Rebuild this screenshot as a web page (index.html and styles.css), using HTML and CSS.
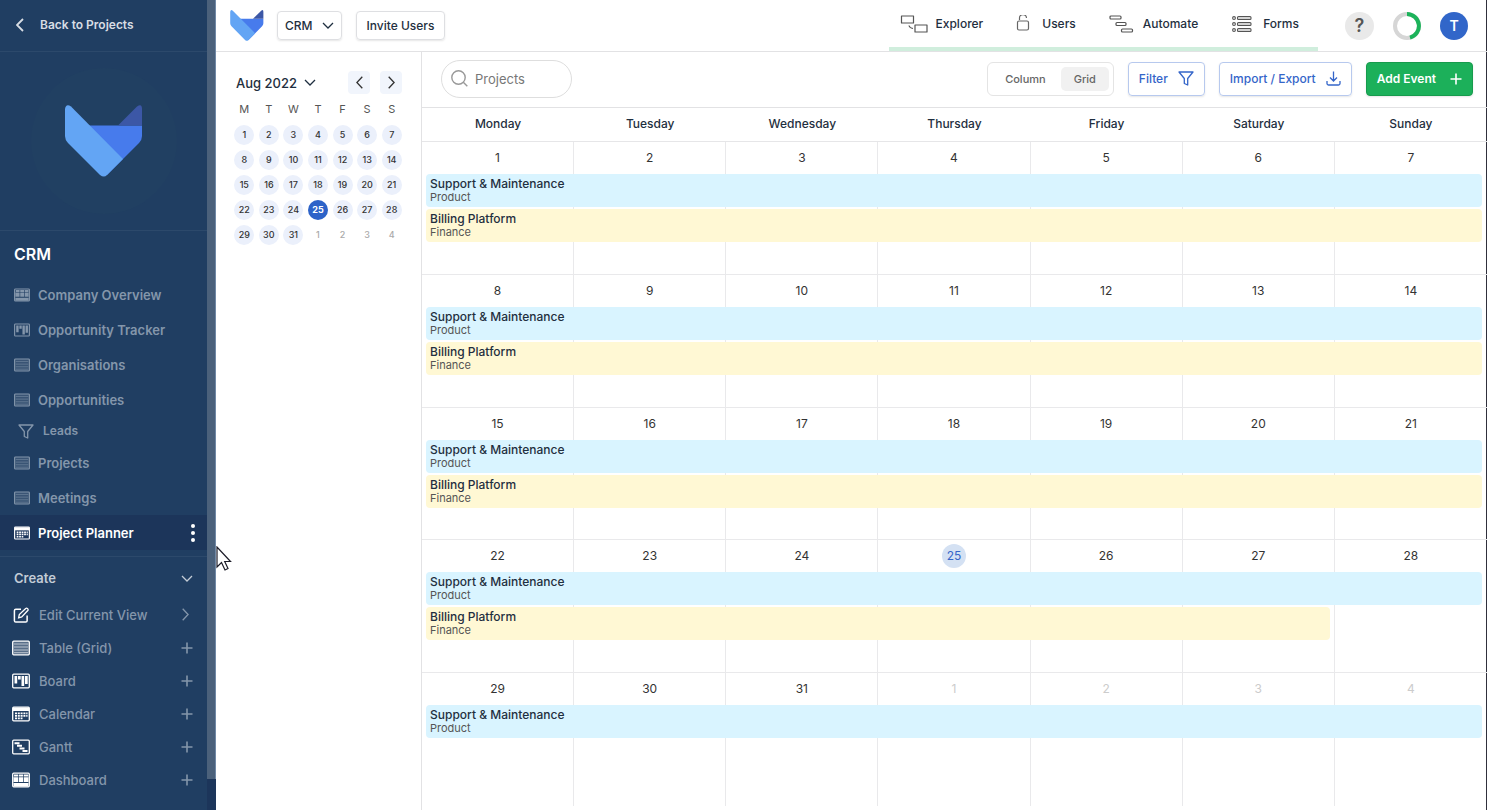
FILE: index.html
```html
<!DOCTYPE html>
<html lang="en">
<head>
<meta charset="utf-8">
<title>Project Planner</title>
<link rel="stylesheet" href="styles.css">
</head>
<body>
<svg class="sprite" aria-hidden="true">
  <symbol id="fox" viewBox="0 0 78 72"><path d="M22 20.500H77V31q0 4-3 7L42 70Z" fill="#477bec"/><path d="M77 20.500H53L72 1.500Q77-2 77 4Z" fill="#3c57a6"/><path d="M0 4Q1-2 6 1.500L58 54 42 70q-3 3-7 0L3 38q-3-3-3-7Z" fill="#63a5f4"/></symbol>
  <symbol id="table" viewBox="0 0 18 15"><rect x=".7" y=".7" width="16.600" height="13.600" rx="1" fill="currentColor" fill-opacity=".25" stroke="currentColor" stroke-width="1.300"/><path d="M2 3.500h14M2 6.500h14M2 9.500h14M2 12.200h14" stroke="currentColor" stroke-opacity=".6"/></symbol>
  <symbol id="board" viewBox="0 0 18 15"><rect x=".7" y=".7" width="16.600" height="13.600" rx="1" fill="none" stroke="currentColor" stroke-width="1.300"/><path d="M2.500 2.500h2.700v7.500H2.500zM6 2.500h2.700v3.500H6zM9.500 2.500h2.700v10H9.500zM13 2.500h2.700v8H13z" fill="currentColor"/></symbol>
  <symbol id="calendar" viewBox="0 0 18 15"><rect x=".7" y=".7" width="16.600" height="13.600" rx="1" fill="none" stroke="currentColor" stroke-width="1.300"/><path d="M1 1h16v3.500H1z" fill="currentColor"/><path d="M3 6.800h12.500M3 9.300h12.500M3 11.800h7.500" stroke="currentColor" stroke-width="1.700" stroke-dasharray="2 .8"/></symbol>
  <symbol id="gantt" viewBox="0 0 18 15"><rect x=".7" y=".7" width="16.600" height="13.600" rx="1" fill="none" stroke="currentColor" stroke-width="1.300"/><path d="M2.500 3.700h5M5 6.200h5M7.500 8.900h5M10.500 11.500h5" stroke="currentColor" stroke-width="2"/></symbol>
  <symbol id="dashboard" viewBox="0 0 18 15"><rect x=".7" y=".7" width="16.600" height="13.600" rx="1" fill="none" stroke="currentColor" stroke-width="1.300"/><path d="M2 2h4.300v2H2zM7 2h4.300v2H7zM12 2h4.300v2H12zM1.500 4.800h4.800v4.800H1.500zM7 4.800h4.300v4.800H7zM12 4.800h4.500v4.800H12zM1.500 10.500h15v3.500h-15z" fill="currentColor"/></symbol>
  <symbol id="filter" viewBox="0 0 16 15"><path d="M1 1h14l-5.300 6.500V14l-3.400-1.500v-5Z" fill="none" stroke="currentColor" stroke-width="1.300" stroke-linejoin="round"/></symbol>
  <symbol id="down" viewBox="0 0 12 7"><path d="m1 1 5 5 5-5" fill="none" stroke="currentColor" stroke-width="1.300"/></symbol>
  <symbol id="left" viewBox="0 0 7 13"><path d="M6.300.7.900 6.500l5.400 5.800" fill="none" stroke="currentColor" stroke-width="1.300"/></symbol>
  <symbol id="right" viewBox="0 0 7 13"><path d="m.7.700 5.400 5.800L.7 12.300" fill="none" stroke="currentColor" stroke-width="1.300"/></symbol>
  <symbol id="plus" viewBox="0 0 12 12"><path d="M6 .5v11M.5 6h11" stroke="currentColor" stroke-width="1.600"/></symbol>
</svg>
<aside class="sidebar">
  <div class="sidebar-content">
    <a class="back" href="#"><svg class="back-icon" viewBox="0 0 8 14"><path d="M7 1 1 7l6 6" fill="none" stroke="currentColor" stroke-width="1.800"/></svg>Back to Projects</a>
    <div class="brand"><div class="brand-disc"><svg class="brand-logo"><use href="#fox"/></svg></div></div>
    <h1 class="project-name">CRM</h1>
    <nav class="views">
      <a class="view" href="#"><svg class="view-icon"><use href="#dashboard"/></svg>Company Overview</a>
      <a class="view" href="#"><svg class="view-icon"><use href="#board"/></svg>Opportunity Tracker</a>
      <a class="view" href="#"><svg class="view-icon"><use href="#table"/></svg>Organisations</a>
      <a class="view" href="#"><svg class="view-icon"><use href="#table"/></svg>Opportunities</a>
      <a class="view view-sub" href="#"><svg class="filter-icon"><use href="#filter"/></svg>Leads</a>
      <a class="view" href="#"><svg class="view-icon"><use href="#table"/></svg>Projects</a>
      <a class="view" href="#"><svg class="view-icon"><use href="#table"/></svg>Meetings</a>
      <a class="view view-active" href="#"><svg class="view-icon"><use href="#calendar"/></svg>Project Planner<svg class="more" viewBox="0 0 4 18"><circle cx="2" cy="2" r="2"/><circle cx="2" cy="9" r="2"/><circle cx="2" cy="16" r="2"/></svg></a>
    </nav>
    <section class="create">
      <button class="create-title">Create<svg class="chevron-down push"><use href="#down"/></svg></button>
      <button class="create-item"><svg class="create-icon" viewBox="0 0 18 17"><path d="M9 2.500H3.500Q2 2.500 2 4v10.500Q2 16 3.500 16H14q1.500 0 1.500-1.500V9" fill="none" stroke="#fff" stroke-width="1.600"/><path d="m6.500 11.500.700-3.500L14 1.500q1-.8 2 .2t.2 2L9.800 10.500Z" fill="none" stroke="#fff" stroke-width="1.400"/></svg>Edit Current View<svg class="chevron-right push"><use href="#right"/></svg></button>
      <button class="create-item"><svg class="create-icon"><use href="#table"/></svg>Table (Grid)<svg class="plus push"><use href="#plus"/></svg></button>
      <button class="create-item"><svg class="create-icon"><use href="#board"/></svg>Board<svg class="plus push"><use href="#plus"/></svg></button>
      <button class="create-item"><svg class="create-icon"><use href="#calendar"/></svg>Calendar<svg class="plus push"><use href="#plus"/></svg></button>
      <button class="create-item"><svg class="create-icon"><use href="#gantt"/></svg>Gantt<svg class="plus push"><use href="#plus"/></svg></button>
      <button class="create-item"><svg class="create-icon"><use href="#dashboard"/></svg>Dashboard<svg class="plus push"><use href="#plus"/></svg></button>
    </section>
  </div>
  <div class="scroll-track"><div class="scroll-thumb"></div></div>
</aside>
<div class="app">
  <header class="topbar">
    <svg class="top-logo"><use href="#fox"/></svg>
    <button class="top-button project-switch">CRM<svg class="chevron-down"><use href="#down"/></svg></button>
    <button class="top-button">Invite Users</button>
    <nav class="tools">
      <a class="tool" href="#"><svg width="28" height="18" viewBox="0 0 28 18"><path d="M1.500 1h12v7h-12zM15 10h12v7H15zM9 10.500q.5 2.500 4 3" fill="none" stroke="#555" stroke-width="1.200" stroke-linejoin="round"/></svg>Explorer</a>
      <a class="tool" href="#"><svg width="18" height="18" viewBox="0 0 18 18"><rect x="1.500" y="6" width="11" height="9" rx="1.500" fill="none" stroke="#666" stroke-width="1.200"/><path d="M3.500 5V3.500a3.500 3.500 0 0 1 7-.5" fill="none" stroke="#666" stroke-width="1.200"/></svg>Users</a>
      <a class="tool" href="#"><svg width="26" height="18" viewBox="0 0 26 18"><g fill="none" stroke="#555" stroke-width="1.200"><rect x="1" y="1" width="11" height="3" rx="1"/><rect x="7" y="7.500" width="10" height="3" rx="1"/><rect x="12.500" y="14" width="11" height="3" rx="1"/></g></svg>Automate</a>
      <a class="tool" href="#"><svg width="24" height="18" viewBox="0 0 24 18"><g fill="none" stroke="#555" stroke-width="1.100"><circle cx="3" cy="3" r="1.400"/><circle cx="3" cy="9" r="1.400"/><circle cx="3" cy="15" r="1.400"/><rect x="6.500" y="1.600" width="13.500" height="2.800" rx="1"/><rect x="6.500" y="7.600" width="13.500" height="2.800" rx="1"/><rect x="6.500" y="13.600" width="13.500" height="2.800" rx="1"/></g></svg>Forms</a>
    </nav>
    <div class="account">
      <button class="help" aria-label="Help">?</button>
      <svg class="ring" viewBox="0 0 28 28"><circle cx="14" cy="14" r="12" fill="none" stroke="#d6d6d6" stroke-width="4"/><path d="M14 2a12 12 0 0 1 3 23.600" fill="none" stroke="#1cb35a" stroke-width="4"/></svg>
      <button class="avatar">T</button>
    </div>
  </header>
  <div class="body">
    <section class="mini">
      <div class="mini-head">
        <button class="month">Aug 2022<svg class="chevron-down"><use href="#down"/></svg></button>
        <button class="step" aria-label="Previous month"><svg><use href="#left"/></svg></button>
        <button class="step" aria-label="Next month"><svg><use href="#right"/></svg></button>
      </div>
      <div class="mini-grid mini-weekdays"><span>M</span><span>T</span><span>W</span><span>T</span><span>F</span><span>S</span><span>S</span></div>
      <div class="mini-grid mini-days">
        <button>1</button><button>2</button><button>3</button><button>4</button><button>5</button><button>6</button><button>7</button>
        <button>8</button><button>9</button><button>10</button><button>11</button><button>12</button><button>13</button><button>14</button>
        <button>15</button><button>16</button><button>17</button><button>18</button><button>19</button><button>20</button><button>21</button>
        <button>22</button><button>23</button><button>24</button><button class="selected">25</button><button>26</button><button>27</button><button>28</button>
        <button>29</button><button>30</button><button>31</button><button class="outside">1</button><button class="outside">2</button><button class="outside">3</button><button class="outside">4</button>
      </div>
    </section>
    <main class="planner">
      <div class="toolbar">
        <label class="search"><svg viewBox="0 0 17 17"><circle cx="7.500" cy="7.500" r="6.700" fill="none" stroke="#999" stroke-width="1.400"/><path d="m12.300 12.300 4 4" stroke="#999" stroke-width="1.400"/></svg><input type="text" placeholder="Projects" aria-label="Search projects"></label>
        <div class="toggle"><button>Column</button><button class="on">Grid</button></div>
        <button class="action">Filter<svg class="filter-icon"><use href="#filter"/></svg></button>
        <button class="action">Import / Export<svg class="download" viewBox="0 0 15 15"><path d="M7.500.500v9M4 6.500l3.500 3.500L11 6.500M1 10v2.500Q1 14 2.500 14h10q1.500 0 1.500-1.500V10" fill="none" stroke="currentColor" stroke-width="1.300"/></svg></button>
        <button class="action add">Add Event<svg class="plus"><use href="#plus"/></svg></button>
      </div>
      <div class="weekdays"><span>Monday</span><span>Tuesday</span><span>Wednesday</span><span>Thursday</span><span>Friday</span><span>Saturday</span><span>Sunday</span></div>
      <div class="month-grid">
        <div class="week">
          <div class="day"><time>1</time></div><div class="day"><time>2</time></div><div class="day"><time>3</time></div><div class="day"><time>4</time></div><div class="day"><time>5</time></div><div class="day"><time>6</time></div><div class="day"><time>7</time></div>
          <article class="event product"><h2>Support &amp; Maintenance</h2><p>Product</p></article>
          <article class="event finance"><h2>Billing Platform</h2><p>Finance</p></article>
        </div>
        <div class="week">
          <div class="day"><time>8</time></div><div class="day"><time>9</time></div><div class="day"><time>10</time></div><div class="day"><time>11</time></div><div class="day"><time>12</time></div><div class="day"><time>13</time></div><div class="day"><time>14</time></div>
          <article class="event product"><h2>Support &amp; Maintenance</h2><p>Product</p></article>
          <article class="event finance"><h2>Billing Platform</h2><p>Finance</p></article>
        </div>
        <div class="week">
          <div class="day"><time>15</time></div><div class="day"><time>16</time></div><div class="day"><time>17</time></div><div class="day"><time>18</time></div><div class="day"><time>19</time></div><div class="day"><time>20</time></div><div class="day"><time>21</time></div>
          <article class="event product"><h2>Support &amp; Maintenance</h2><p>Product</p></article>
          <article class="event finance"><h2>Billing Platform</h2><p>Finance</p></article>
        </div>
        <div class="week">
          <div class="day"><time>22</time></div><div class="day"><time>23</time></div><div class="day"><time>24</time></div><div class="day today"><time>25</time></div><div class="day"><time>26</time></div><div class="day"><time>27</time></div><div class="day"><time>28</time></div>
          <article class="event product"><h2>Support &amp; Maintenance</h2><p>Product</p></article>
          <article class="event finance ends-saturday"><h2>Billing Platform</h2><p>Finance</p></article>
        </div>
        <div class="week">
          <div class="day"><time>29</time></div><div class="day"><time>30</time></div><div class="day"><time>31</time></div><div class="day other"><time>1</time></div><div class="day other"><time>2</time></div><div class="day other"><time>3</time></div><div class="day other"><time>4</time></div>
          <article class="event product"><h2>Support &amp; Maintenance</h2><p>Product</p></article>
        </div>
      </div>
    </main>
  </div>
</div>
<svg class="cursor" viewBox="0 0 16 25"><path d="M1 1v20l4.500-4.500L9 24l3-1.500-3.300-7H14.500Z" fill="#fff" stroke="#1c1c28" stroke-width="1.200"/></svg>
</body>
</html>
```
FILE: styles.css
```css
* { box-sizing: border-box; }
body { margin: 0; display: flex; height: 100vh; overflow: hidden; background: #fff; color: #1f2f40; font: 500 12px/16px Inter, "Liberation Sans", sans-serif; }
button, input { font: inherit; color: inherit; border: 0; background: none; padding: 0; margin: 0; }
a { color: inherit; text-decoration: none; }
h1, h2, p { margin: 0; }
svg { flex: none; display: block; }
.sprite { position: absolute; width: 0; height: 0; }
.push { margin-left: auto; }
.chevron-down { width: 12px; height: 7px; }
.chevron-right { width: 7px; height: 13px; margin-right: 4px; }
.plus { width: 12px; height: 12px; }
.filter-icon { width: 16px; height: 15px; }

.sidebar { display: flex; flex: none; width: 216px; background: #203e62; color: #8496ab; }
.sidebar-content { flex: 1; overflow: hidden; }
.scroll-track { width: 9px; background: #1c355a; }
.scroll-thumb { height: 779px; background: #4b617b; border-right: 1px solid #7189a6; }
.back { display: flex; align-items: center; gap: 16px; height: 52px; padding: 0 16px 2px; border-bottom: 1px solid #2c496b; color: #d8dde4; font-weight: 600; }
.back-icon { width: 8px; height: 14px; }
.brand { display: flex; align-items: center; justify-content: center; height: 179px; border-bottom: 1px solid #2c496b; }
.brand-disc { display: flex; align-items: center; justify-content: center; width: 146px; height: 146px; border-radius: 50%; background: #214062; }
.brand-logo { width: 78px; height: 72px; }
.project-name { padding: 13px 14px; color: #fff; font-size: 16px; line-height: 20px; font-weight: 600; }
.views { padding-bottom: 6px; border-bottom: 1px solid #2c496b; }
.view { display: flex; align-items: center; gap: 8px; height: 35px; padding: 0 12px 0 14px; font-size: 13px; font-weight: 600; }
.view-icon { width: 16px; height: 14px; }
.view-sub { height: 28px; padding: 0 18px; gap: 9px; font-size: 12px; }
.view-active { background: #1c355a; color: #fff; }
.more { width: 4px; height: 18px; margin-left: auto; fill: #fff; }
.create-title { display: flex; align-items: center; width: 100%; height: 42px; padding: 0 14px; color: #c3ccd6; font-size: 13px; font-weight: 600; }
.create-item { display: flex; align-items: center; gap: 9px; width: 100%; height: 33px; padding: 0 14px 2px 12px; font-size: 13px; }
.create-icon { width: 18px; height: 16px; color: #fff; }

.app { flex: 1; min-width: 0; display: flex; flex-direction: column; box-shadow: inset -1px 0 #30303c; }
.topbar { display: flex; align-items: center; height: 52px; padding: 0 19px 0 14px; border-bottom: 1px solid #e2e2e4; }
.top-logo { width: 34px; height: 31px; margin-right: 13px; }
.top-button { display: flex; align-items: center; height: 29px; padding: 0 10px; margin-right: 14px; border: 1px solid #dedfe2; border-radius: 4px; box-shadow: 0 1px 2px #0000001a; }
.project-switch { gap: 9px; padding: 0 7px; }
.tools { display: flex; align-items: center; gap: 33px; height: 51px; margin-left: auto; padding: 0 19px 0 11px; border-bottom: 4px solid #d0eedd; }
.tool { display: flex; align-items: center; gap: 8px; }
.account { display: flex; align-items: center; gap: 19px; margin-left: 27px; }
.help, .avatar { width: 29px; height: 28px; border-radius: 50%; background: #e9e9e9; color: #555; font-size: 18px; font-weight: 600; }
.avatar { width: 28px; background: #3166c9; color: #fff; font-size: 14px; }
.ring { width: 28px; height: 28px; }

.body { flex: 1; display: flex; min-height: 0; }
.mini { flex: none; width: 206px; padding: 19px 17px 0 16px; border-right: 1px solid #e2e2e4; }
.mini-head { display: flex; align-items: center; gap: 10px; padding: 0 2px 0 4px; }
.month { display: flex; align-items: center; gap: 7px; margin-right: auto; font-size: 13px; }
.step { display: flex; align-items: center; justify-content: center; width: 22px; height: 23px; border-radius: 4px; background: #f1f5fc; color: #333; }
.step svg { width: 7px; height: 13px; }
.mini-grid { display: grid; grid-template-columns: repeat(7, 1fr); justify-items: center; row-gap: 5px; }
.mini-weekdays { padding: 7px 0 8px; color: #555; font-size: 11px; font-weight: 400; }
.mini-days button { width: 20px; height: 20px; border-radius: 50%; background: #ebf0fb; color: #333; font-size: 9px; line-height: 20px; white-space: nowrap; }
.mini-days .selected { background: #2d63c8; color: #fff; font-weight: 700; }
.mini-days .outside { background: none; color: #aaa; }

.planner { flex: 1; min-width: 0; display: flex; flex-direction: column; }
.toolbar { display: flex; align-items: center; gap: 14px; height: 56px; padding: 0 14px 2px 19px; border-bottom: 1px solid #e2e2e4; }
.search { display: flex; align-items: center; gap: 7px; width: 131px; height: 38px; margin-right: auto; padding: 0 9px; border: 1px solid #dedede; border-radius: 19px; font-size: 13px; font-weight: 400; }
.search svg { width: 17px; height: 17px; }
.search input { min-width: 0; flex: 1; outline: 0; }
.search input::placeholder { color: #777; opacity: 1; }
.toggle { display: flex; align-items: center; gap: 2px; height: 34px; padding: 0 4px; border: 1px solid #e4e4e4; border-radius: 6px; color: #666; font-size: 11px; }
.toggle button { height: 24px; padding: 0 13px; border-radius: 5px; }
.toggle .on { background: #f1f1f1; }
.action { display: flex; align-items: center; gap: 10px; height: 34px; padding: 0 10px; border: 1px solid #b7c9ee; border-radius: 4px; color: #3465c9; box-shadow: 0 1px 2px #0000001a; }
.download { width: 15px; height: 15px; }
.add { gap: 14px; border-color: #179b4d; background: #1cb05a; color: #fff; font-weight: 600; }
.weekdays { display: grid; grid-template-columns: repeat(7, 1fr); align-items: center; height: 34px; padding-bottom: 1px; border-bottom: 1px solid #e6e6e8; text-align: center; }
.month-grid { flex: 1; display: grid; grid-auto-rows: 1fr; padding-bottom: 4px; }
.week { display: grid; grid-template-columns: repeat(7, 1fr); grid-template-rows: 30px 33px 33px 1fr; row-gap: 2px; border-bottom: 1px solid #e9e9eb; }
.week:last-child { border-bottom: 0; }
.day { grid-row: 1 / -1; padding-top: 4px; border-right: 1px solid #e9e9eb; font-weight: 400; color: #333; }
.day:nth-child(7) { border-right: 0; }
.day time { display: block; width: 24px; height: 24px; margin: 0 auto; border-radius: 50%; line-height: 24px; text-align: center; }
.today time { background: #d4e1f3; color: #3465c9; }
.other time { color: #ccc; }
.day:nth-child(1) { grid-column: 1; }
.day:nth-child(2) { grid-column: 2; }
.day:nth-child(3) { grid-column: 3; }
.day:nth-child(4) { grid-column: 4; }
.day:nth-child(5) { grid-column: 5; }
.day:nth-child(6) { grid-column: 6; }
.day:nth-child(7) { grid-column: 7; }
.event { grid-column: 1 / 8; margin: 0 5px 0 4px; padding: 3px 4px 0; border-radius: 4px; }
.event h2 { font-size: 12px; line-height: 14px; font-weight: 500; }
.event p { color: #555; font-size: 11px; line-height: 13px; font-weight: 400; }
.product { grid-row: 2; background: #d9f4ff; }
.finance { grid-row: 3; background: #fff8d4; }
.ends-saturday { grid-column-end: 7; }
.cursor { position: absolute; left: 216px; top: 546px; width: 16px; height: 25px; }
```
